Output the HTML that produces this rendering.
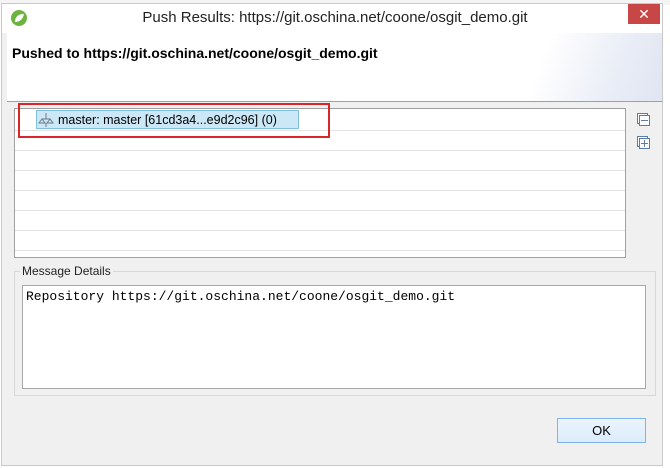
<!DOCTYPE html><html><head><style>
body{margin:0;width:670px;height:468px;background:#fff;position:relative;overflow:hidden;font-family:"Liberation Sans",sans-serif}
.a{position:absolute}
.l{position:absolute;left:15px;width:610px;height:1px;background:#e4e4e4}
</style></head><body>
<div class="a" style="left:0;top:0;width:670px;height:5px;background:#f4f4f4"></div>
<div class="a" style="left:1px;top:3px;width:662px;height:463px;background:#f0f0f0;border:1px solid #c8c8c8;box-sizing:border-box"></div>
<div class="a" style="left:2px;top:4px;width:660px;height:29px;background:#fff"></div>
<svg class="a" style="left:10px;top:9px" width="18" height="18"><circle cx="9" cy="9" r="8" fill="#6db33f"/><path d="M5 13 C5 7 9 5 14 5 C13 10 10 13 5 13Z" fill="#fff"/></svg>
<div class="a" style="left:0;width:670px;top:9px;text-align:center;font-size:15px;color:#222">Push Results: https://git.oschina.net/coone/osgit_demo.git</div>
<div class="a" style="left:628px;top:4px;width:32px;height:20px;background:#c74646;color:#fff;font-size:14px;text-align:center;line-height:20px">✕</div>
<div class="a" style="left:7px;top:33px;width:655px;height:68px;background:linear-gradient(110deg,#fff 80%,#e9edf6 92%,#dfe5f2);border-bottom:1px solid #a0a0a0"></div>
<div class="a" style="left:12px;top:45px;font-size:14px;font-weight:bold;color:#000">Pushed to https://git.oschina.net/coone/osgit_demo.git</div>
<div class="a" style="left:14px;top:108px;width:612px;height:150px;background:#fff;border:1px solid #a0a0a0;box-sizing:border-box"></div>
<div class="l" style="top:130px"></div><div class="l" style="top:150px"></div><div class="l" style="top:170px"></div><div class="l" style="top:190px"></div><div class="l" style="top:210px"></div><div class="l" style="top:230px"></div><div class="l" style="top:250px"></div>
<div class="a" style="left:36px;top:110px;width:263px;height:19px;background:#cce8f7;border:1px solid #7fbfe0;box-sizing:border-box"></div>
<svg class="a" style="left:38px;top:112px" width="16" height="16" fill="none" stroke="#6a7a8a"><path d="M8 1v6M4 7h8M4 7l-3 4h6zM12 7l-3 4h6zM8 11v4"/></svg>
<div class="a" style="left:58px;top:113px;font-size:12.5px;color:#000">master: master [61cd3a4...e9d2c96] (0)</div>
<div class="a" style="left:18px;top:103px;width:312px;height:35px;border:2px solid #d9262a;box-sizing:border-box"></div>
<svg class="a" style="left:636px;top:112px" width="16" height="40" fill="#fff" stroke="#5c7ea6"><rect x="1.5" y="1.5" width="10" height="10"/><rect x="3.5" y="3.5" width="10" height="10"/><path d="M5 8.5h7"/><rect x="1.5" y="24.5" width="10" height="10"/><rect x="3.5" y="26.5" width="10" height="10"/><path d="M5 31.5h7M8.5 28v7"/></svg>
<div class="a" style="left:14px;top:271px;width:642px;height:125px;border:1px solid #d8d8d8;box-sizing:border-box"></div>
<div class="a" style="left:20px;top:264px;background:#f0f0f0;padding:0 2px;font-size:12px;color:#222">Message Details</div>
<div class="a" style="left:22px;top:285px;width:624px;height:104px;background:#fff;border:1px solid #a8a8a8;box-sizing:border-box"></div>
<div class="a" style="left:26px;top:289px;font-family:'Liberation Mono',monospace;font-size:13px;color:#000">Repository https://git.oschina.net/coone/osgit_demo.git</div>
<div class="a" style="left:557px;top:418px;width:89px;height:25px;background:linear-gradient(#ecf4fc,#dcecfc);border:1px solid #7eb4ea;box-sizing:border-box;text-align:center;line-height:23px;font-size:13px">OK</div>
</body></html>
